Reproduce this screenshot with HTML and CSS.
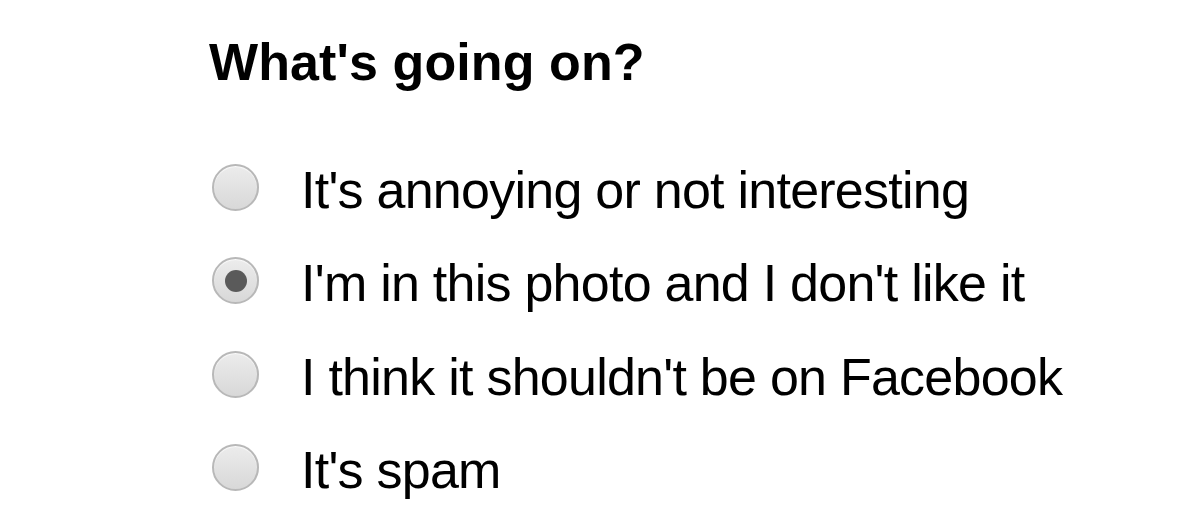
FILE: index.html
```html
<!DOCTYPE html>
<html>
<head>
<meta charset="utf-8">
<link rel="stylesheet" href="styles.css">
</head>
<body>
<div class="panel">
  <h1 class="title">What's going on?</h1>
  <ul class="options">
    <li class="option"><span class="radio"></span><span class="label">It's annoying or not interesting</span></li>
    <li class="option"><span class="radio checked"></span><span class="label">I'm in this photo and I don't like it</span></li>
    <li class="option"><span class="radio"></span><span class="label">I think it shouldn't be on Facebook</span></li>
    <li class="option"><span class="radio"></span><span class="label">It's spam</span></li>
  </ul>
</div>
</body>
</html>
```
FILE: styles.css
```css
html, body {
  margin: 0;
  padding: 0;
  background: #ffffff;
}
body {
  width: 1200px;
  height: 526px;
  overflow: hidden;
  font-family: "Liberation Sans", Arial, sans-serif;
  color: #000;
}
.panel {
  padding: 36px 0 0 209px;
}
.title {
  margin: 0;
  font-size: 52px;
  line-height: 52px;
  font-weight: bold;
  letter-spacing: 0.1px;
}
.options {
  list-style: none;
  margin: 56px 0 0 0;
  padding: 0;
}
.option {
  display: flex;
  align-items: center;
  height: 93.33px;
  line-height: 93.33px;
}
.radio {
  flex: none;
  box-sizing: border-box;
  width: 47px;
  height: 47px;
  margin: 0 42px 6px 3px;
  border-radius: 50%;
  border: 2px solid #b8b8b8;
  background: linear-gradient(#ececec, #d8d8d8);
  box-shadow: inset 0 1px 1px rgba(255, 255, 255, 0.8);
  display: flex;
  align-items: center;
  justify-content: center;
}
.radio.checked::after {
  content: "";
  width: 22px;
  height: 22px;
  border-radius: 50%;
  background: #5a5a5a;
}
.label {
  font-size: 52px;
  letter-spacing: -0.75px;
  white-space: nowrap;
}
```
